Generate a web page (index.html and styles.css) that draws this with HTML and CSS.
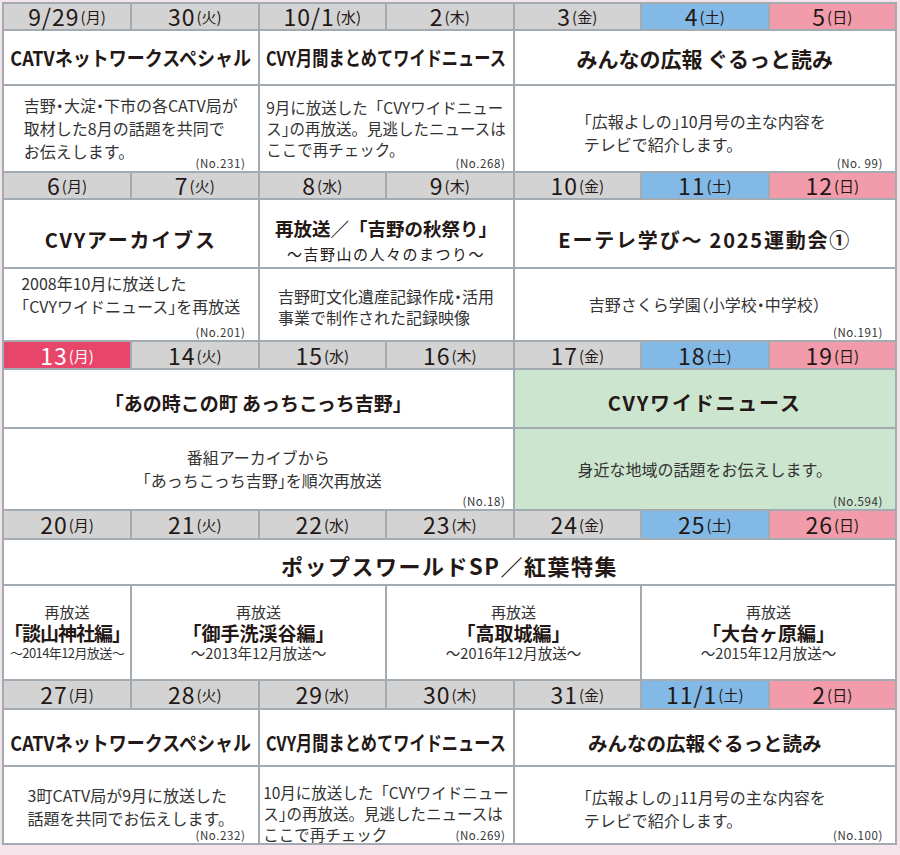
FILE: index.html
```html
<!DOCTYPE html>
<html lang="ja">
<head>
<meta charset="utf-8">
<title>番組表</title>
<link rel="stylesheet" href="styles.css">
</head>
<body>
<div class="sched">
  <!-- week 1 -->
  <div class="hd"><span class="dt">9/29</span><span class="wd">(月)</span></div>
  <div class="hd"><span class="dt">30</span><span class="wd">(火)</span></div>
  <div class="hd"><span class="dt">10/1</span><span class="wd">(水)</span></div>
  <div class="hd"><span class="dt">2</span><span class="wd">(木)</span></div>
  <div class="hd"><span class="dt">3</span><span class="wd">(金)</span></div>
  <div class="hd sat"><span class="dt">4</span><span class="wd">(土)</span></div>
  <div class="hd sun"><span class="dt">5</span><span class="wd">(日)</span></div>

  <div class="ttl s2"><span class="cond">CATVネットワークスペシャル</span></div>
  <div class="ttl s2"><span class="cond cond-x">CVY月間まとめてワイドニュース</span></div>
  <div class="ttl s3 big">みんなの広報 ぐるっと読み</div>

  <div class="desc s2"><span class="txt">吉野<span class="h">・</span>大淀<span class="h">・</span>下市の各CATV局が<br>取材した8月の話題を共同で<br>お伝えします。</span><span class="no">(No.231)</span></div>
  <div class="desc s2 tight"><span class="txt">9月に放送した「CVYワイドニュー<br>ス<span class="h">」</span>の再放送。見逃したニュースは<br>ここで再チェック。</span><span class="no no-mid">(No.268)</span></div>
  <div class="desc s3 low"><span class="txt"><span class="h">「</span>広報よしの<span class="h">」</span>10月号の主な内容を<br>テレビで紹介します。</span><span class="no">(No. 99)</span></div>

  <!-- week 2 -->
  <div class="hd"><span class="dt">6</span><span class="wd">(月)</span></div>
  <div class="hd"><span class="dt">7</span><span class="wd">(火)</span></div>
  <div class="hd"><span class="dt">8</span><span class="wd">(水)</span></div>
  <div class="hd"><span class="dt">9</span><span class="wd">(木)</span></div>
  <div class="hd"><span class="dt">10</span><span class="wd">(金)</span></div>
  <div class="hd sat"><span class="dt">11</span><span class="wd">(土)</span></div>
  <div class="hd sun"><span class="dt">12</span><span class="wd">(日)</span></div>

  <div class="ttl s2 t-w2 wide">CVYアーカイブス</div>
  <div class="ttl s2 t-w2 stack">
    <span class="main">再放送／「吉野の秋祭り」</span>
    <span class="sub">〜吉野山の人々のまつり〜</span>
  </div>
  <div class="ttl s3 t-w2 wide">Eーテレ学び〜 2025運動会①</div>

  <div class="desc s2 up"><span class="txt">2008年10月に放送した<br><span class="h">「</span>CVYワイドニュース<span class="h">」</span>を再放送</span><span class="no">(No.201)</span></div>
  <div class="desc s2 short"><span class="txt">吉野町文化遺産記録作成<span class="h">・</span>活用<br>事業で制作された記録映像</span></div>
  <div class="desc s3"><span class="txt">吉野さくら学園<span class="h">（</span>小学校<span class="h">・</span>中学校<span class="h">）</span></span><span class="no">(No.191)</span></div>

  <!-- week 3 -->
  <div class="hd today"><span class="dt">13</span><span class="wd">(月)</span></div>
  <div class="hd"><span class="dt">14</span><span class="wd">(火)</span></div>
  <div class="hd"><span class="dt">15</span><span class="wd">(水)</span></div>
  <div class="hd"><span class="dt">16</span><span class="wd">(木)</span></div>
  <div class="hd"><span class="dt">17</span><span class="wd">(金)</span></div>
  <div class="hd sat"><span class="dt">18</span><span class="wd">(土)</span></div>
  <div class="hd sun"><span class="dt">19</span><span class="wd">(日)</span></div>

  <div class="ttl s4 t-w3 ttl-19">「あの時この町 あっちこっち吉野」</div>
  <div class="ttl s3 t-w3 wide green">CVYワイドニュース</div>

  <div class="desc s4 center"><span class="txt">番組アーカイブから<br>「あっちこっち吉野<span class="h">」</span>を順次再放送</span><span class="no no-mid">(No.18)</span></div>
  <div class="desc s3 green"><span class="txt">身近な地域の話題をお伝えします。</span><span class="no">(No.594)</span></div>

  <!-- week 4 -->
  <div class="hd"><span class="dt">20</span><span class="wd">(月)</span></div>
  <div class="hd"><span class="dt">21</span><span class="wd">(火)</span></div>
  <div class="hd"><span class="dt">22</span><span class="wd">(水)</span></div>
  <div class="hd"><span class="dt">23</span><span class="wd">(木)</span></div>
  <div class="hd"><span class="dt">24</span><span class="wd">(金)</span></div>
  <div class="hd sat"><span class="dt">25</span><span class="wd">(土)</span></div>
  <div class="hd sun"><span class="dt">26</span><span class="wd">(日)</span></div>

  <div class="ttl s7 t-w4 huge">ポップスワールドSP／紅葉特集</div>

  <div class="ep narrow">
    <span class="ep-pre">再放送</span>
    <span class="ep-name">「談山神社編」</span>
    <span class="ep-date">〜2014年12月放送〜</span>
  </div>
  <div class="ep s2">
    <span class="ep-pre">再放送</span>
    <span class="ep-name">「御手洗渓谷編」</span>
    <span class="ep-date">〜2013年12月放送〜</span>
  </div>
  <div class="ep s2">
    <span class="ep-pre">再放送</span>
    <span class="ep-name">「高取城編」</span>
    <span class="ep-date">〜2016年12月放送〜</span>
  </div>
  <div class="ep s2">
    <span class="ep-pre">再放送</span>
    <span class="ep-name">「大台ヶ原編」</span>
    <span class="ep-date">〜2015年12月放送〜</span>
  </div>

  <!-- week 5 -->
  <div class="hd"><span class="dt">27</span><span class="wd">(月)</span></div>
  <div class="hd"><span class="dt">28</span><span class="wd">(火)</span></div>
  <div class="hd"><span class="dt">29</span><span class="wd">(水)</span></div>
  <div class="hd"><span class="dt">30</span><span class="wd">(木)</span></div>
  <div class="hd"><span class="dt">31</span><span class="wd">(金)</span></div>
  <div class="hd sat"><span class="dt">11/1</span><span class="wd">(土)</span></div>
  <div class="hd sun"><span class="dt">2</span><span class="wd">(日)</span></div>

  <div class="ttl s2 t-w5"><span class="cond">CATVネットワークスペシャル</span></div>
  <div class="ttl s2 t-w5"><span class="cond cond-x">CVY月間まとめてワイドニュース</span></div>
  <div class="ttl s3 t-w5 mid">みんなの広報ぐるっと読み</div>

  <div class="desc s2 low-s"><span class="txt">3町CATV局が9月に放送した<br>話題を共同でお伝えします。</span><span class="no">(No.232)</span></div>
  <div class="desc s2 tight from-top"><span class="txt">10月に放送した「CVYワイドニュー<br>ス<span class="h">」</span>の再放送。見逃したニュースは<br>ここで再チェック</span><span class="no no-mid">(No.269)</span></div>
  <div class="desc s3 low"><span class="txt"><span class="h">「</span>広報よしの<span class="h">」</span>11月号の主な内容を<br>テレビで紹介します。</span><span class="no">(No.100)</span></div>
</div>
</body>
</html>
```

FILE: styles.css
```css
html, body {
  margin: 0;
  padding: 0;
  background: #f6e4eb;
}

body {
  padding: 2px 3px 0 2px;
  font-family: "Noto Sans CJK JP", "Noto Sans", sans-serif;
  color: #231815;
}

.sched {
  display: grid;
  grid-template-columns: repeat(7, 1fr);
  grid-template-rows: 25px 53px 85px 25px 67px 71px 26px 57px 80px 27px 44px 93px 27px 55px 76px;
  gap: 2px;
  padding: 2px;
  background: #a3abb2;
  width: 891px;
}

.s2 { grid-column: span 2; }
.s3 { grid-column: span 3; }
.s4 { grid-column: span 4; }
.s7 { grid-column: span 7; }

/* header (date) cells */
.hd {
  background: #d3d3d3;
  display: flex;
  align-items: center;
  justify-content: center;
  line-height: 25px;
  white-space: nowrap;
  color: #231815;
}
.hd.sat { background: #82b9e6; }
.hd.sun { background: #f29cab; }
.hd.today { background: #e8456a; color: #fff; }

.dt {
  font-size: 23px;
  letter-spacing: 1px;
}
.wd {
  font-size: 15px;
  margin-left: 1px;
}

/* title cells */
.ttl {
  background: #fff;
  display: flex;
  flex-direction: column;
  align-items: center;
  justify-content: center;
  font-size: 18px;
  font-weight: 700;
  line-height: 26px;
  white-space: nowrap;
  color: #231815;
}
.ttl.wide { font-size: 20px; letter-spacing: 1.8px; }
.ttl.big { font-size: 21px; }
.ttl.mid { font-size: 19.5px; }
.ttl.huge { font-size: 22px; letter-spacing: 1.5px; }
.ttl.ttl-19 { font-size: 19px; }

.cond {
  display: inline-block;
  font-size: 20px;
  transform: scaleX(0.9);
}
.cond.cond-x { transform: scaleX(0.81); }

.stack .main { font-size: 18.5px; line-height: 26px; }
.stack .sub {
  font-size: 15px;
  font-weight: 400;
  letter-spacing: 1.5px;
  line-height: 22px;
  margin-top: 2px;
}

.t-w2 { padding-top: 12px; }
.t-w3 { padding-top: 9px; }
.t-w4 { padding-top: 6px; }
.t-w5 { padding-top: 11px; }

.green { background: #cce5cf; }

/* description cells */
.desc {
  position: relative;
  background: #fff;
  display: flex;
  align-items: center;
  justify-content: center;
  font-size: 16px;
  line-height: 23px;
  color: #333;
  white-space: nowrap;
}
.desc.green { background: #cce5cf; }
.desc .txt {
  display: inline-block;
  text-align: left;
}
.desc .h { font-feature-settings: "halt"; }
.desc.center .txt { text-align: center; }
.desc.tight { font-size: 15.5px; line-height: 21px; }
.desc.low { padding-top: 8px; }
.desc.low-s { padding-top: 4px; }
.desc.from-top { align-items: flex-start; padding-top: 15px; }
.desc.up { padding-bottom: 19px; }
.desc.short { line-height: 21px; padding-top: 5px; }

.no {
  position: absolute;
  right: 12px;
  bottom: 0;
  font-size: 11.5px;
  line-height: 16px;
  letter-spacing: 0.6px;
  color: #333;
}
.no.no-mid { right: 7px; }

/* week 4 episode cells */
.ep {
  background: #fff;
  display: flex;
  flex-direction: column;
  align-items: center;
  justify-content: center;
  text-align: center;
  white-space: nowrap;
  color: #231815;
}
.ep-pre { font-size: 15px; line-height: 20px; color: #333; }
.ep-name { font-size: 19px; font-weight: 700; line-height: 21px; }
.ep-date { font-size: 14.5px; line-height: 20px; color: #333; }
.narrow .ep-name { font-size: 19px; letter-spacing: -1px; }
.narrow .ep-date { font-size: 13px; letter-spacing: -0.6px; }
```
